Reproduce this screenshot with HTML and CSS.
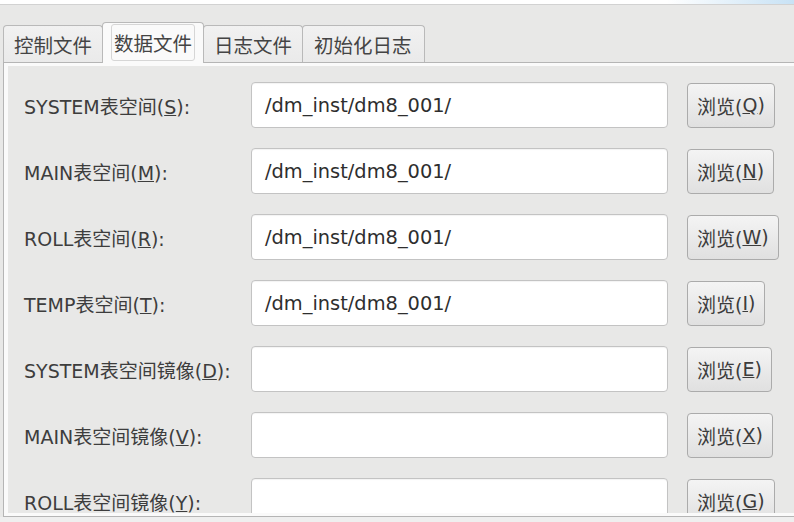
FILE: index.html
```html
<!DOCTYPE html>
<html lang="zh-CN">
<head>
<meta charset="utf-8">
<title>数据文件</title>
<link rel="stylesheet" href="styles.css">
</head>
<body>
<div class="topbar"></div>
<div class="notebook">
  <div class="tabs">
    <div class="tab">控制文件</div>
    <div class="tab active"><span class="focus">数据文件</span></div>
    <div class="tab">日志文件</div>
    <div class="tab wide">初始化日志</div>
  </div>
  <div class="panel">
    <div class="inner">
      <div class="form">
        <div class="lbl">SYSTEM表空间(<u>S</u>):</div>
        <div class="field">/dm_inst/dm8_001/</div>
        <div class="btn">浏览(<u>Q</u>)</div>

        <div class="lbl">MAIN表空间(<u>M</u>):</div>
        <div class="field">/dm_inst/dm8_001/</div>
        <div class="btn">浏览(<u>N</u>)</div>

        <div class="lbl">ROLL表空间(<u>R</u>):</div>
        <div class="field">/dm_inst/dm8_001/</div>
        <div class="btn">浏览(<u>W</u>)</div>

        <div class="lbl">TEMP表空间(<u>T</u>):</div>
        <div class="field">/dm_inst/dm8_001/</div>
        <div class="btn">浏览(<u>I</u>)</div>

        <div class="lbl">SYSTEM表空间镜像(<u>D</u>):</div>
        <div class="field"></div>
        <div class="btn">浏览(<u>E</u>)</div>

        <div class="lbl">MAIN表空间镜像(<u>V</u>):</div>
        <div class="field"></div>
        <div class="btn">浏览(<u>X</u>)</div>

        <div class="lbl">ROLL表空间镜像(<u>Y</u>):</div>
        <div class="field"></div>
        <div class="btn">浏览(<u>G</u>)</div>
      </div>
    </div>
  </div>
</div>
<div class="footer"></div>
</body>
</html>
```
FILE: styles.css
```css
html, body {
  margin: 0;
  padding: 0;
}
body {
  width: 794px;
  height: 522px;
  overflow: hidden;
  background: #e8e8e7;
  font-family: "DejaVu Sans", "Noto Sans CJK SC", sans-serif;
  font-size: 19px;
  color: #3c3c3c;
}
.topbar {
  height: 4px;
  background: linear-gradient(to right, #ffffff 0%, #ffffff 84%, #c8e2f5 100%);
  border-bottom: 1px solid #d2d2d2;
}
.notebook {
  margin-top: 17px;
}
.tabs {
  display: flex;
  align-items: flex-end;
  height: 40px;
  padding-left: 3px;
}
.tab {
  box-sizing: border-box;
  height: 37px;
  padding: 0 10px;
  display: flex;
  align-items: center;
  border: 1px solid #b9b9b9;
  border-bottom: none;
  border-radius: 4px 4px 0 0;
  background: linear-gradient(#f1f1f1, #eaeaea);
  color: #444;
  font-size: 19.5px;
  white-space: nowrap;
  margin-left: -1px;
}
.tab:first-child {
  margin-left: 0;
}
.tab.wide {
  padding: 0 12px 0 11px;
}
.tab.active {
  position: relative;
  z-index: 1;
  height: 41px;
  margin-bottom: -1px;
  padding: 0 8px 1px 8px;
  background: #fafafa;
}
.focus {
  border: 1px solid #d6d6d6;
  border-radius: 3px;
  padding: 3px 2px;
}
.panel {
  border: 1px solid #b5b5b5;
  border-right: none;
  margin-left: 3px;
  padding: 3px 0 3px 4px;
  background: #fafafa;
}
.inner {
  height: 447px;
  overflow: hidden;
  background: #e8e8e7;
  padding: 16px 0 0 16px;
  box-sizing: border-box;
}
.form {
  display: grid;
  grid-template-columns: 227px 417px max-content;
  grid-auto-rows: 46px;
  row-gap: 20px;
  align-items: center;
}
.lbl {
  white-space: nowrap;
  color: #3d3d3d;
}
.field {
  height: 46px;
  box-sizing: border-box;
  border: 1px solid #c3c3c3;
  border-radius: 4px;
  background: #ffffff;
  padding: 0 13px;
  display: flex;
  align-items: center;
  color: #2e2e2e;
  font-size: 19.4px;
  box-shadow: inset 0 1px 1px rgba(0,0,0,0.05);
}
.btn {
  justify-self: start;
  margin-left: 19px;
  height: 45px;
  box-sizing: border-box;
  border: 1px solid #ababab;
  border-radius: 4px;
  padding: 0 9px;
  display: flex;
  align-items: center;
  background: linear-gradient(#f4f4f4, #e0e0e0);
  color: #3c3c3c;
  white-space: nowrap;
}
.footer {
  height: 10px;
  background: #efefef;
}
```
